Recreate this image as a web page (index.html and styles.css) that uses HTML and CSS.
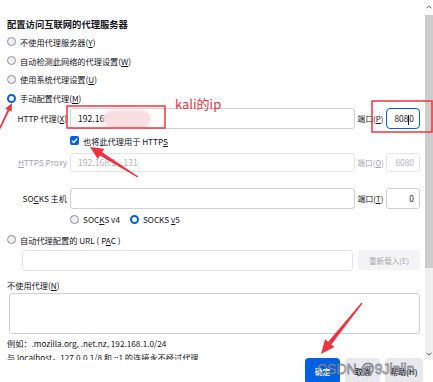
FILE: index.html
```html
<!DOCTYPE html>
<html lang="zh-CN">
<head>
    <meta charset="UTF-8">
    <meta name="viewport" content="width=device-width, initial-scale=1.0">
    <title>连接设置</title>
    <link rel="stylesheet" href="styles.css">
</head>
<body>
    <div class="window">
        <div class="scroll-area">
            <div class="content">
                <h1 class="title">配置访问互联网的代理服务器</h1>

                <div class="option"><span class="radio"></span><span>不使用代理服务器(<u>Y</u>)</span></div>
                <div class="option"><span class="radio"></span><span>自动检测此网络的代理设置(<u>W</u>)</span></div>
                <div class="option"><span class="radio"></span><span>使用系统代理设置(<u>U</u>)</span></div>
                <div class="option"><span class="radio checked"></span><span>手动配置代理(<u>M</u>)</span></div>

                <div class="proxy-row http-row">
                    <span class="row-label">HTTP 代理(<u>X</u>)</span>
                    <div class="field"><span>192.168</span></div>
                    <span class="port-label">端口(<u>P</u>)</span>
                    <div class="port focused"><span>808<span class="caret"></span>0</span></div>
                </div>

                <div class="check-row">
                    <span class="checkbox">
                        <svg width="9" height="9" viewBox="0 0 9 9"><polyline points="1.8,4.6 3.7,6.5 7.3,2.5" fill="none" stroke="#fff" stroke-width="1.3"/></svg>
                    </span>
                    <span>也将此代理用于 HTTP<u>S</u></span>
                </div>

                <div class="proxy-row https-row disabled">
                    <span class="row-label"><u>H</u>TTPS Proxy</span>
                    <div class="field"><span>192.168.1<span class="smudge">0</span>.131</span></div>
                    <span class="port-label">端口(<u>O</u>)</span>
                    <div class="port"><span>8080</span></div>
                </div>

                <div class="proxy-row socks-row">
                    <span class="row-label">SO<u>C</u>KS 主机</span>
                    <div class="field"></div>
                    <span class="port-label">端口(<u>T</u>)</span>
                    <div class="port"><span>0</span></div>
                </div>

                <div class="socks-version">
                    <span class="option-inline"><span class="radio"></span><span>SOC<u>K</u>S v4</span></span>
                    <span class="option-inline"><span class="radio checked"></span><span>SOCKS <u>v</u>5</span></span>
                </div>

                <div class="option pac-option"><span class="radio"></span><span>自动代理配置的 URL ( P<u>A</u>C )</span></div>

                <div class="pac-row">
                    <div class="field pac-field"></div>
                    <div class="reload-btn">重新载入(E)</div>
                </div>

                <div class="section-label">不使用代理(<u>N</u>)</div>
                <div class="textarea"></div>
                <div class="hint">例如：.mozilla.org, .net.nz, 192.168.1.0/24</div>
                <div class="hint">与 localhost，127.0.0.1/8 和 ::1 的连接永不经过代理</div>
            </div>

            <div class="scrollbar">
                <div class="sb-arrow">
                    <svg width="6" height="4" viewBox="0 0 6 4"><polyline points="0.5,3.3 3,0.8 5.5,3.3" fill="none" stroke="#555" stroke-width="1"/></svg>
                </div>
                <div class="sb-thumb"></div>
                <div class="sb-track"></div>
                <div class="sb-arrow down">
                    <svg width="6" height="4" viewBox="0 0 6 4"><polyline points="0.5,0.7 3,3.2 5.5,0.7" fill="none" stroke="#555" stroke-width="1"/></svg>
                </div>
            </div>
        </div>

        <div class="footer">
            <button class="btn primary">确定</button>
            <button class="btn">取消</button>
            <button class="btn help">帮助(H)</button>
        </div>

        <!-- annotations drawn on top of the screenshot -->
        <div class="blob"></div>
        <div class="note">kali的ip</div>
        <div class="watermark">CSDN @9Jinlin</div>
        <svg class="marks" width="433" height="382" viewBox="0 0 433 382">
            <rect x="67" y="106" width="98" height="22" fill="none" stroke="#f2333d" stroke-width="1.5"/>
            <rect x="372" y="101" width="60" height="31" fill="none" stroke="#f2333d" stroke-width="1.5"/>
            <polygon fill="#f2333d" points="12,103 11.7,111.7 9.4,110.6 -1.3,132.3 -2.7,131.7 7.6,109.8 5.3,108.7"/>
            <polygon fill="#f2333d" points="90,147 104.2,148.8 102.1,152.2 138.4,176.4 137.6,177.6 99.9,155.6 97.8,159"/>
            <polygon fill="#f2333d" points="321,354 334.5,346.9 331.4,344.4 362.5,303.4 361.5,302.6 328.2,341.8 325.1,339.3"/>
        </svg>
    </div>
</body>
</html>
```

FILE: styles.css
```css
body {
    margin: 0;
    background-color: #fff;
    font-family: "Noto Sans CJK SC", "Noto Sans", sans-serif;
    color: #15141a;
}

.window {
    position: relative;
    width: 433px;
    height: 382px;
    overflow: hidden;
}

.scroll-area {
    display: flex;
    height: 360px;
}

.content {
    width: 425px;
    box-sizing: border-box;
    padding: 17px 0 0 7px;
    overflow: hidden;
    font-size: 8.2px;
}

.title {
    margin: 0 0 1.6px 0;
    height: 14px;
    line-height: 14px;
    font-size: 9.3px;
    font-weight: bold;
}

u {
    text-underline-offset: 1px;
}

.option {
    display: flex;
    align-items: center;
    gap: 4px;
    height: 18.7px;
    white-space: nowrap;
}

.radio {
    width: 9px;
    height: 9px;
    box-sizing: border-box;
    border: 1px solid #8f8f9d;
    border-radius: 50%;
    background-color: #f0f0f4;
    flex-shrink: 0;
}

.radio.checked {
    border: 2.6px solid #0061e0;
    background-color: #fff;
}

.proxy-row {
    display: flex;
    align-items: center;
    height: 22px;
}

.row-label {
    width: 60px;
    margin-right: 3px;
    text-align: right;
    white-space: nowrap;
}

.field {
    width: 285px;
    height: 21px;
    box-sizing: border-box;
    border: 1px solid #cfcfd8;
    border-radius: 3px;
    padding-left: 7px;
    display: flex;
    align-items: center;
    font-size: 8.6px;
    background-color: #fff;
}

.port-label {
    width: 31px;
    text-align: center;
    font-size: 7.8px;
    white-space: nowrap;
}

.port {
    width: 34px;
    height: 21px;
    box-sizing: border-box;
    border: 1px solid #cfcfd8;
    border-radius: 3px;
    padding-right: 5px;
    display: flex;
    align-items: center;
    justify-content: flex-end;
    font-size: 8.4px;
}

.port.focused {
    border: 1.5px solid #0061e0;
    border-radius: 4px;
}

.caret {
    display: inline-block;
    width: 1px;
    height: 10px;
    vertical-align: middle;
    background-color: #15141a;
}

.check-row {
    display: flex;
    align-items: center;
    gap: 4px;
    height: 23px;
    padding-left: 63px;
}

.checkbox {
    width: 9px;
    height: 9px;
    border-radius: 2px;
    background-color: #0061e0;
    display: flex;
}

.https-row {
    height: 20px;
}

.https-row .field,
.https-row .port {
    height: 19px;
}

.disabled {
    color: #a5a5ad;
}

.disabled .field,
.disabled .port {
    border-color: #e4e4ea;
    color: #b4b4bb;
}

.smudge {
    color: #ececf0;
}

.socks-row {
    margin-top: 15px;
}

.socks-version {
    display: flex;
    align-items: center;
    gap: 10px;
    height: 20px;
    padding-left: 63px;
}

.option-inline {
    display: flex;
    align-items: center;
    gap: 4px;
}

.pac-option {
    margin-top: 1px;
}

.pac-row {
    display: flex;
    gap: 5px;
    height: 21px;
    margin-top: 1px;
    padding-left: 15px;
}

.pac-field {
    width: 331px;
    border-color: #e4e4ea;
}

.reload-btn {
    width: 62px;
    height: 20px;
    border-radius: 3px;
    background-color: #f4f4f6;
    color: #a9a9b0;
    font-size: 7.6px;
    display: flex;
    align-items: center;
    justify-content: center;
}

.section-label {
    margin-top: 6px;
    height: 16px;
    line-height: 16px;
}

.textarea {
    width: 411px;
    height: 41px;
    margin-left: 2px;
    box-sizing: border-box;
    border: 1px solid #cfcfd8;
    border-radius: 3px;
}

.hint {
    height: 14px;
    line-height: 14px;
    white-space: nowrap;
}

.textarea + .hint {
    margin-top: 2px;
}

.scrollbar {
    width: 8px;
    display: flex;
    flex-direction: column;
}

.sb-arrow {
    height: 15px;
    display: flex;
    align-items: center;
    justify-content: center;
    padding-bottom: 1px;
    box-sizing: border-box;
}

.sb-arrow.down {
    height: 11px;
    background-color: #f0f0f0;
}

.sb-thumb {
    height: 253px;
    background-color: #cdcdcd;
}

.sb-track {
    flex: 1;
    background-color: #f0f0f0;
}

.footer {
    display: flex;
    justify-content: flex-end;
    gap: 5px;
    height: 22px;
    margin-top: -2px;
    padding-right: 10px;
}

.btn {
    width: 35px;
    height: 26px;
    border: none;
    border-radius: 4px;
    background-color: #e9e9ed;
    color: #15141a;
    font-family: "Noto Sans CJK SC", sans-serif;
    font-size: 7.8px;
    font-weight: 500;
    padding: 0;
}

.btn.primary {
    background-color: #0061e0;
    color: #fff;
}

.btn.help {
    width: 38px;
}

.blob {
    position: absolute;
    left: 103px;
    top: 110px;
    width: 48px;
    height: 18px;
    border-radius: 9px;
    background-color: #f8dde1;
    filter: blur(1.5px);
}

.note {
    position: absolute;
    left: 175px;
    top: 96px;
    font-size: 13px;
    line-height: 16px;
    color: #f2333d;
}

.watermark {
    position: absolute;
    left: 317px;
    top: 360px;
    font-family: "Liberation Sans", sans-serif;
    font-size: 14px;
    line-height: 18px;
    color: rgba(255, 255, 255, 0.45);
    -webkit-text-stroke: 0.8px rgba(105, 105, 115, 0.8);
    white-space: nowrap;
}

.marks {
    position: absolute;
    left: 0;
    top: 0;
    pointer-events: none;
}
```
